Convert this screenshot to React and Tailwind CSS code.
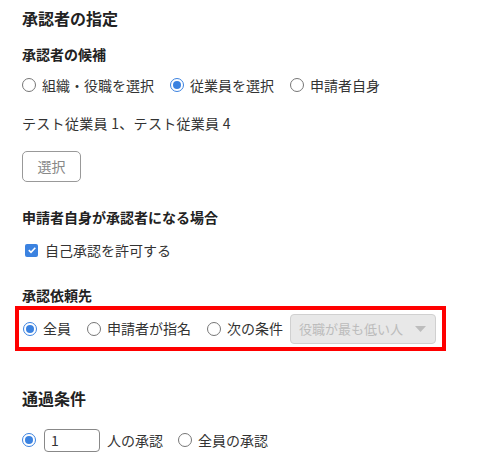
import React, { useState } from 'react';

const Radio = ({ checked, label, onClick }) => (
    <label className="flex items-center cursor-pointer" onClick={onClick}>
        <span
            className={
                checked
                    ? "w-[14px] h-[14px] rounded-full border-[1.5px] border-[#3b82e0] flex items-center justify-center"
                    : "w-[14px] h-[14px] rounded-full border-[1.5px] border-[#767676]"
            }
        >
            {checked && <span className="w-[8px] h-[8px] rounded-full bg-[#3b82e0]" />}
        </span>
        {label && <span className="ml-[6px]">{label}</span>}
    </label>
);

export default function App() {
    const [candidate, setCandidate] = useState('employee');
    const [target, setTarget] = useState('all');
    const [pass, setPass] = useState('count');

    return (
        <div
            className="w-[489px] h-[474px] bg-white text-[#333] text-[14px] px-[22px] overflow-hidden"
            style={{ fontFamily: '"Noto Sans CJK JP", "Noto Sans", sans-serif' }}
        >
            {/* 承認者の指定 */}
            <h2 className="mt-[6px] h-[24px] leading-[24px] text-[16px] font-bold text-[#222]">承認者の指定</h2>

            <h3 className="mt-[14px] h-[20px] leading-[20px] font-bold text-[#222]">承認者の候補</h3>
            <div className="mt-[11px] h-[20px] flex items-center gap-[16px] leading-[20px]">
                <Radio checked={candidate === 'org'} label="組織・役職を選択" onClick={() => setCandidate('org')} />
                <Radio checked={candidate === 'employee'} label="従業員を選択" onClick={() => setCandidate('employee')} />
                <Radio checked={candidate === 'self'} label="申請者自身" onClick={() => setCandidate('self')} />
            </div>
            <p className="mt-[18px] h-[20px] leading-[20px] tracking-[0.3px]">テスト従業員 1、テスト従業員 4</p>
            <button className="mt-[18px] w-[59px] h-[31px] rounded-[5px] border border-[#999] text-[#888] flex items-center justify-center">
                選択
            </button>

            <h3 className="mt-[25px] h-[20px] leading-[20px] font-bold text-[#222]">申請者自身が承認者になる場合</h3>
            <label className="mt-[13px] h-[20px] flex items-center leading-[20px]">
                <span className="ml-[3px] w-[13px] h-[13px] rounded-[2px] bg-[#3b82e0] flex items-center justify-center">
                    <svg width="10" height="10" viewBox="0 0 10 10">
                        <path d="M1.8 5.2 L4 7.3 L8.3 2.8" fill="none" stroke="white" strokeWidth="1.6" />
                    </svg>
                </span>
                <span className="ml-[7px]">自己承認を許可する</span>
            </label>

            <h3 className="mt-[25px] h-[20px] leading-[20px] font-bold text-[#222]">承認依頼先</h3>
            {/* highlighted row */}
            <div className="mt-[1px] -ml-[7px] w-[431px] h-[45px] border-[4px] border-[#ff0000] pl-[4px] flex items-center">
                <div className="flex items-center gap-[16px]">
                    <Radio checked={target === 'all'} label="全員" onClick={() => setTarget('all')} />
                    <Radio checked={target === 'named'} label="申請者が指名" onClick={() => setTarget('named')} />
                    <Radio checked={target === 'cond'} label="次の条件" onClick={() => setTarget('cond')} />
                </div>
                <div className="ml-[7px] w-[146px] h-[30px] rounded-[4px] border border-[#d0d0d0] bg-[#e8e8e8] text-[#bcbcbc] text-[13px] flex items-center pl-[8px] pr-[9px]">
                    <span className="flex-1">役職が最も低い人</span>
                    <svg width="11" height="6" viewBox="0 0 11 6">
                        <path d="M0 0 L11 0 L5.5 6 Z" fill="#bdbdbd" />
                    </svg>
                </div>
            </div>

            <h2 className="mt-[35px] h-[24px] leading-[24px] text-[16px] font-bold text-[#222]">通過条件</h2>
            <div className="mt-[18px] h-[24px] flex items-center">
                <Radio checked={pass === 'count'} onClick={() => setPass('count')} />
                <input
                    defaultValue="1"
                    className="ml-[8px] w-[56px] h-[23px] rounded-[4px] border border-[#888] px-[6px] text-[14px] text-[#333] outline-none"
                />
                <span className="ml-[7px]">人の承認</span>
                <span className="ml-[15px]">
                    <Radio checked={pass === 'all'} label="全員の承認" onClick={() => setPass('all')} />
                </span>
            </div>
        </div>
    );
}
